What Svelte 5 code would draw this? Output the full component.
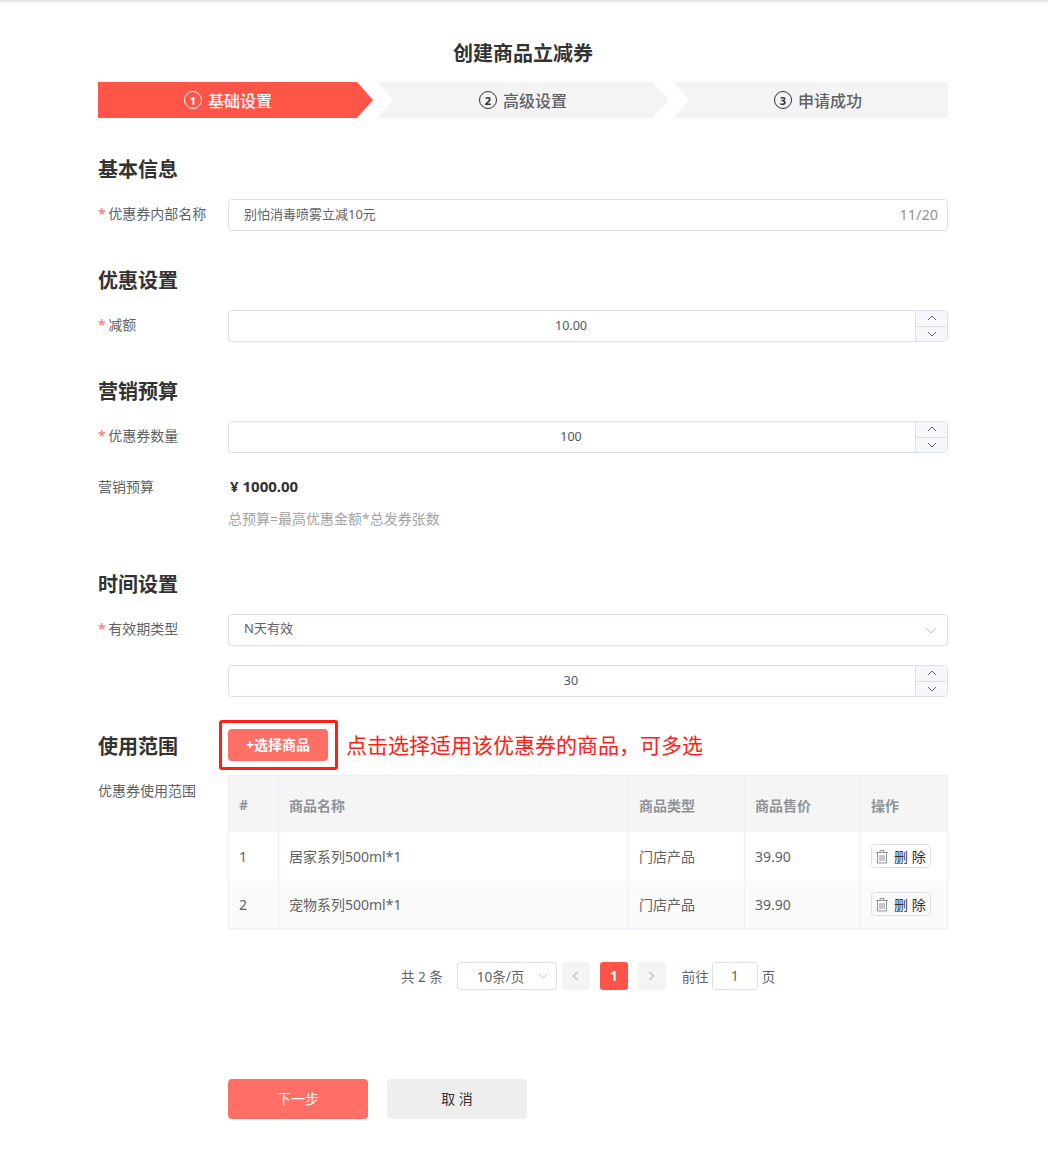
<script>
  const steps = [
    { no: 1, label: "基础设置", cls: "first on" },
    { no: 2, label: "高级设置", cls: "mid" },
    { no: 3, label: "申请成功", cls: "last" },
  ];
  const goods = [
    { no: 1, name: "居家系列500ml*1", type: "门店产品", price: "39.90" },
    { no: 2, name: "宠物系列500ml*1", type: "门店产品", price: "39.90" },
  ];
</script>

{#snippet stepper(value)}
  <div class="control number">
    <span class="value">{value}</span>
    <div class="arrows">
      <span class="arrow">
        <svg width="10" height="6" viewBox="0 0 10 6"><path d="M1 5l4-4 4 4" /></svg>
      </span>
      <span class="arrow">
        <svg width="10" height="6" viewBox="0 0 10 6"><path d="M1 1l4 4 4-4" /></svg>
      </span>
    </div>
  </div>
{/snippet}

<div class="page">
  <h1>创建商品立减券</h1>

  <div class="steps">
    {#each steps as s}
      <div class="step {s.cls}">
        <span class="circle">{s.no}</span>
        <span>{s.label}</span>
      </div>
    {/each}
  </div>

  <h2 class="first-head">基本信息</h2>
  <div class="row">
    <div class="label"><i>*</i> 优惠券内部名称</div>
    <div class="control text">
      <span>别怕消毒喷雾立减10元</span>
      <span class="count">11/20</span>
    </div>
  </div>

  <h2>优惠设置</h2>
  <div class="row">
    <div class="label"><i>*</i> 减额</div>
    {@render stepper("10.00")}
  </div>

  <h2>营销预算</h2>
  <div class="row">
    <div class="label"><i>*</i> 优惠券数量</div>
    {@render stepper("100")}
  </div>
  <div class="row budget">
    <div class="label">营销预算</div>
    <div class="money">¥ 1000.00</div>
  </div>
  <div class="hint">总预算=最高优惠金额*总发券张数</div>

  <h2 class="time-head">时间设置</h2>
  <div class="row">
    <div class="label"><i>*</i> 有效期类型</div>
    <div class="control text select">
      <span>N天有效</span>
      <svg width="12" height="7" viewBox="0 0 12 7"><path d="M1 1l5 5 5-5" /></svg>
    </div>
  </div>
  <div class="row second">
    <div class="label"></div>
    {@render stepper("30")}
  </div>

  <div class="scope-head">
    <h2>使用范围</h2>
    <div class="mark"><button class="pick">+选择商品</button></div>
    <span class="note">点击选择适用该优惠券的商品，可多选</span>
  </div>

  <div class="row scope">
    <div class="label">优惠券使用范围</div>
    <table>
      <thead>
        <tr>
          <th class="c1">#</th>
          <th class="c2">商品名称</th>
          <th class="c3">商品类型</th>
          <th class="c4">商品售价</th>
          <th>操作</th>
        </tr>
      </thead>
      <tbody>
        {#each goods as g}
          <tr>
            <td>{g.no}</td>
            <td>{g.name}</td>
            <td>{g.type}</td>
            <td>{g.price}</td>
            <td>
              <button class="del">
                <svg width="14" height="15" viewBox="0 0 14 15">
                  <path d="M1 3.5h12M5 3.5V1.500h4v2M2.500 3.500v10.500h9V3.500M5 6v6M7 6v6M9 6v6" />
                </svg>
                <span>删 除</span>
              </button>
            </td>
          </tr>
        {/each}
      </tbody>
    </table>
  </div>

  <div class="pager">
    <span class="total">共 2 条</span>
    <div class="size">
      <span>10条/页</span>
      <svg width="10" height="6" viewBox="0 0 10 6"><path d="M1 1l4 4 4-4" /></svg>
    </div>
    <span class="pg">
      <svg width="7" height="10" viewBox="0 0 7 10"><path d="M5.500 1l-4 4 4 4" /></svg>
    </span>
    <span class="pg cur">1</span>
    <span class="pg">
      <svg width="7" height="10" viewBox="0 0 7 10"><path d="M1.500 1l4 4-4 4" /></svg>
    </span>
    <span class="goto">前往</span>
    <span class="jump">1</span>
    <span>页</span>
  </div>

  <div class="actions">
    <button class="next">下一步</button>
    <button class="cancel">取 消</button>
  </div>
</div>

<style>
  :global(body) {
    background: #fff;
  }
  .page {
    box-sizing: border-box;
    width: 1048px;
    height: 1154px;
    padding: 0 100px 0 98px;
    border-top: 2px solid #e8e8ec;
    font-family: "Noto Sans", "Noto Sans CJK SC", sans-serif;
    font-size: 14px;
    color: #606266;
  }
  h1 {
    margin: 38px 0 14px;
    height: 28px;
    line-height: 28px;
    font-size: 20px;
    font-weight: 700;
    color: #333;
    text-align: center;
  }
  .steps {
    display: flex;
    gap: 4px;
    height: 36px;
  }
  .step {
    box-sizing: border-box;
    display: flex;
    align-items: center;
    justify-content: center;
    gap: 6px;
    height: 36px;
    background: #f4f4f5;
    font-size: 16px;
    font-weight: 500;
    color: #606266;
  }
  .first {
    width: 275px;
    padding-right: 15px;
    clip-path: polygon(0 0, 259px 0, 100% 50%, 259px 100%, 0 100%);
  }
  .mid {
    width: 292px;
    clip-path: polygon(0 0, 276px 0, 100% 50%, 276px 100%, 0 100%, 16px 50%);
  }
  .last {
    width: 275px;
    padding-left: 15px;
    clip-path: polygon(0 0, 100% 0, 100% 100%, 0 100%, 16px 50%);
  }
  .on {
    background: #ff5549;
    color: #fff;
  }
  .circle {
    display: flex;
    align-items: center;
    justify-content: center;
    box-sizing: border-box;
    width: 18px;
    height: 18px;
    border: 1px solid #303133;
    border-radius: 50%;
    font-size: 11px;
    font-weight: 700;
    color: #303133;
  }
  .on .circle {
    border-color: #fff;
    color: #fff;
  }
  h2 {
    margin: 36px 0 15px;
    height: 28px;
    line-height: 28px;
    font-size: 20px;
    font-weight: 700;
    color: #333;
  }
  .first-head {
    margin-top: 38px;
  }
  .time-head {
    margin: 41px 0 15px;
  }
  .row {
    display: flex;
    align-items: flex-start;
  }
  .label {
    flex: 0 0 130px;
    line-height: 30px;
    color: #606266;
    font-size: 14px;
  }
  .label i {
    margin-right: -1px;
    font-style: normal;
    color: #f56c6c;
  }
  .control {
    box-sizing: border-box;
    flex: 0 0 720px;
    width: 720px;
    height: 32px;
    border: 1px solid #dcdfe6;
    border-radius: 4px;
    background: #fff;
    font-size: 13px;
  }
  .text {
    display: flex;
    align-items: center;
    justify-content: space-between;
    padding: 0 9px 3px 15px;
  }
  .count {
    font-size: 14.500px;
    color: #909399;
  }
  .select {
    padding-bottom: 5px;
  }
  .select svg {
    margin: 5px 1px 0 0;
  }
  .select path {
    stroke: #c0c4cc;
  }
  svg path {
    fill: none;
    stroke: #606266;
    stroke-width: 1;
  }
  .number {
    display: flex;
    overflow: hidden;
  }
  .value {
    flex: 1;
    padding-right: 2px;
    line-height: 30px;
    text-align: center;
    font-size: 12.500px;
    color: #555;
  }
  .arrows {
    display: flex;
    flex-direction: column;
    width: 31px;
    border-left: 1px solid #dcdfe6;
  }
  .arrow {
    flex: 1;
    display: flex;
    align-items: center;
    justify-content: center;
    background: #f5f7fa;
  }
  .arrow + .arrow {
    border-top: 1px solid #dcdfe6;
  }
  .budget {
    margin-top: 18px;
    height: 32px;
  }
  .budget .label {
    line-height: 32px;
  }
  .money {
    margin-left: 2px;
    line-height: 30px;
    font-size: 15px;
    font-weight: 700;
    color: #303133;
  }
  .hint {
    margin: 5px 0 0 130px;
    line-height: 22px;
    font-size: 14px;
    color: #a3a3a3;
  }
  .second {
    margin-top: 19px;
  }
  .scope-head {
    display: flex;
    align-items: center;
    margin-top: 23px;
    height: 50px;
  }
  .scope-head h2 {
    flex: 0 0 121px;
    margin: 3px 0 0;
  }
  .mark {
    box-sizing: border-box;
    width: 119px;
    height: 50px;
    padding: 6px 7px 6px 6px;
    border: 3px solid #ff2014;
    border-radius: 3px;
  }
  button {
    border: 0;
    padding: 0;
    font-family: inherit;
  }
  .pick {
    display: block;
    width: 100px;
    height: 32px;
    padding-bottom: 2px;
    border-radius: 4px;
    background: #ff6f65;
    color: #fff;
    font-size: 14px;
    font-weight: 700;
  }
  .note {
    margin: 0 0 2px 8px;
    font-size: 21px;
    color: #ff2014;
  }
  .scope {
    margin-top: 5px;
  }
  .scope .label {
    padding-top: 1px;
  }
  table {
    flex: 0 0 720px;
    width: 720px;
    border-collapse: collapse;
    table-layout: fixed;
    border: 1px solid #ebeef5;
  }
  th,
  td {
    box-sizing: border-box;
    padding: 0 10px;
    border-left: 1px solid #ebeef5;
    text-align: left;
  }
  th {
    height: 56px;
    padding-top: 2px;
    background: #f5f5f5;
    font-size: 14px;
    font-weight: 700;
    color: #909399;
  }
  td {
    height: 49px;
    font-size: 14px;
    color: #606266;
  }
  tbody tr:nth-child(2) td {
    height: 48px;
    background: #fafafa;
  }
  .c1 {
    width: 50px;
  }
  .c2 {
    width: 350px;
  }
  .c3,
  .c4 {
    width: 116px;
  }
  .del {
    display: flex;
    align-items: center;
    gap: 5px;
    box-sizing: border-box;
    width: 60px;
    height: 24px;
    padding-left: 3px;
    border: 1px solid #dcdfe6;
    border-radius: 4px;
    background: #fff;
    font-size: 14px;
    color: #303133;
    white-space: nowrap;
  }
  tbody tr:nth-child(2) .del {
    background: #fafafa;
  }
  .del path {
    stroke: #909399;
  }
  .pager {
    display: flex;
    align-items: center;
    height: 28px;
    margin: 33px 0 0 303px;
    font-size: 13.500px;
    color: #606266;
  }
  .size {
    display: flex;
    align-items: center;
    justify-content: space-between;
    box-sizing: border-box;
    width: 100px;
    height: 28px;
    margin: 0 5px 0 14px;
    padding: 0 8px 0 19px;
    border: 1px solid #dcdfe6;
    border-radius: 3px;
  }
  .size path {
    stroke: #c0c4cc;
  }
  .pg {
    display: flex;
    align-items: center;
    justify-content: center;
    width: 28px;
    height: 28px;
    border-radius: 3px;
    background: #f4f4f5;
  }
  .pg path {
    stroke: #c0c4cc;
    stroke-width: 1.500;
  }
  .pg.cur {
    margin: 0 10px;
    background: #ff5549;
    color: #fff;
    font-weight: 700;
  }
  .goto {
    margin-left: 16px;
  }
  .jump {
    box-sizing: border-box;
    width: 46px;
    height: 28px;
    margin: 0 4px 0 3px;
    line-height: 26px;
    text-align: center;
    border: 1px solid #dcdfe6;
    border-radius: 3px;
  }
  .actions {
    display: flex;
    gap: 19px;
    margin: 89px 0 0 130px;
  }
  .actions button {
    width: 140px;
    height: 40px;
    padding-bottom: 2px;
    border-radius: 4px;
    font-size: 14px;
  }
  .next {
    background: #ff6f65;
    color: #fff;
  }
  .cancel {
    background: #eee;
    color: #333;
  }
</style>
